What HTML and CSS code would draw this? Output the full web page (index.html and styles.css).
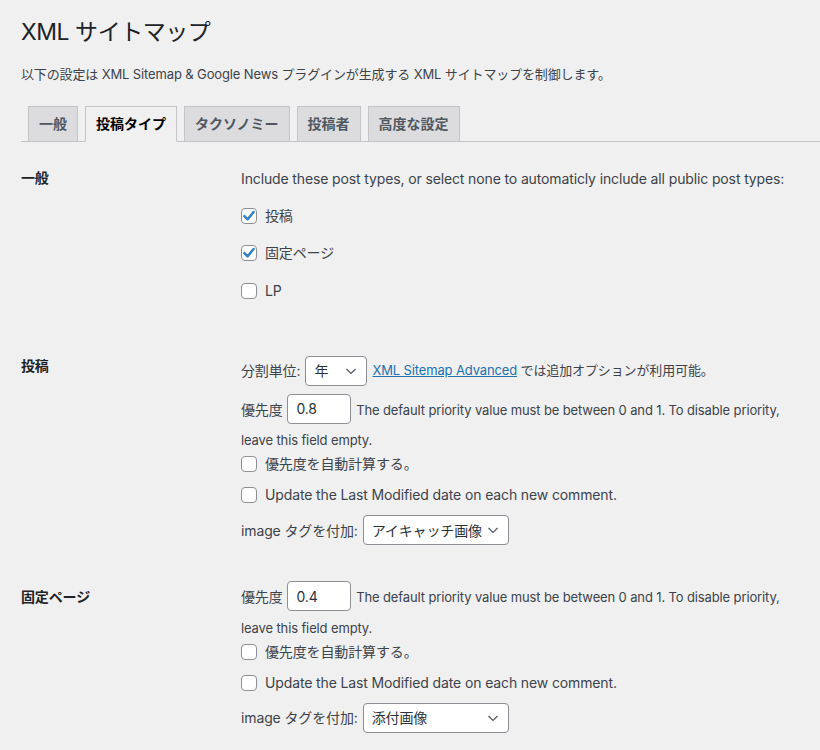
FILE: index.html
```html
<!DOCTYPE html>
<html lang="ja">
<head>
  <meta charset="UTF-8">
  <meta name="viewport" content="width=device-width, initial-scale=1.0">
  <title>XML サイトマップ</title>
  <link rel="stylesheet" href="styles.css">
</head>
<body>
  <div class="wrap">
    <h1>XML サイトマップ</h1>
    <p class="intro">以下の設定は XML Sitemap &amp; Google News プラグインが生成する XML サイトマップを制御します。</p>

    <nav class="nav-tabs">
      <a class="nav-tab" href="#">一般</a>
      <a class="nav-tab active" href="#">投稿タイプ</a>
      <a class="nav-tab" href="#">タクソノミー</a>
      <a class="nav-tab" href="#">投稿者</a>
      <a class="nav-tab" href="#">高度な設定</a>
    </nav>

    <table class="form-table">
      <tr>
        <th>一般</th>
        <td>
          <p class="lead">Include these post types, or select none to automaticly include all public post types:</p>
          <div class="type-list">
            <label class="check"><span class="box"><svg viewBox="0 0 14 14"><polyline points="2.4,7.2 5.6,10.4 11.6,3"/></svg></span>投稿</label>
            <label class="check"><span class="box"><svg viewBox="0 0 14 14"><polyline points="2.4,7.2 5.6,10.4 11.6,3"/></svg></span>固定ページ</label>
            <label class="check"><span class="box"></span>LP</label>
          </div>
        </td>
      </tr>
      <tr>
        <th>投稿</th>
        <td>
          <p class="sel-line">
            分割単位:
            <span class="select w-year">年<svg viewBox="0 0 16 16"><polyline points="3.5,6 8,10.5 12.5,6"/></svg></span>
            <span class="description"><a href="#">XML Sitemap Advanced</a> では追加オプションが利用可能。</span>
          </p>
          <p class="prio">
            <span>優先度</span> <input class="text-input" type="text" value="0.8">
            <span class="description">The default priority value must be between 0 and 1. To disable priority,</span>
            <span class="description">leave this field empty.</span>
          </p>
          <label class="check first"><span class="box"></span>優先度を自動計算する。</label>
          <label class="check"><span class="box"></span>Update the Last Modified date on each new comment.</label>
          <p class="img-line">
            image タグを付加:
            <span class="select w-image">アイキャッチ画像<svg viewBox="0 0 16 16"><polyline points="3.5,6 8,10.5 12.5,6"/></svg></span>
          </p>
        </td>
      </tr>
      <tr>
        <th>固定ページ</th>
        <td>
          <p class="prio top">
            <span>優先度</span> <input class="text-input" type="text" value="0.4">
            <span class="description">The default priority value must be between 0 and 1. To disable priority,</span>
            <span class="description">leave this field empty.</span>
          </p>
          <label class="check first"><span class="box"></span>優先度を自動計算する。</label>
          <label class="check"><span class="box"></span>Update the Last Modified date on each new comment.</label>
          <p class="img-line">
            image タグを付加:
            <span class="select w-image">添付画像<svg viewBox="0 0 16 16"><polyline points="3.5,6 8,10.5 12.5,6"/></svg></span>
          </p>
        </td>
      </tr>
    </table>
  </div>
</body>
</html>
```

FILE: styles.css
```css
* {
  box-sizing: border-box;
}

body {
  margin: 0;
  background: #f0f0f1;
  color: #3c434a;
  font-family: Inter, "Noto Sans CJK JP", sans-serif;
  font-size: 13px;
  line-height: 1.4;
  letter-spacing: -0.01em;
  overflow: hidden;
}

.wrap {
  padding: 10px 0 0 21px;
}

h1 {
  margin: 0;
  padding: 8px 0 4px;
  font-size: 23px;
  font-weight: 400;
  line-height: 1.3;
  color: #1d2327;
  letter-spacing: -0.02em;
}

.intro {
  margin: 13px 0;
  font-size: 13px;
  line-height: 1.5;
}

/* tabs */
.nav-tabs {
  display: flex;
  align-items: flex-end;
  padding-top: 9px;
  border-bottom: 1px solid #c3c4c7;
}

.nav-tab {
  margin-left: 7px;
  padding: 5px 10px;
  border: 1px solid #c3c4c7;
  border-bottom: none;
  background: #dcdcde;
  color: #50575e;
  font-size: 14px;
  font-weight: 600;
  line-height: 24px;
  letter-spacing: 0;
  text-decoration: none;
}

.nav-tab.active {
  background: #f0f0f1;
  color: #000;
  border-bottom: 1px solid #f0f0f1;
  margin-bottom: -1px;
}

/* settings table */
.form-table {
  width: 100%;
  margin-top: 7px;
  border-collapse: collapse;
}

.form-table th {
  width: 210px;
  padding: 20px 10px 20px 0;
  text-align: left;
  vertical-align: top;
  font-size: 14px;
  font-weight: 600;
  line-height: 1.3;
  color: #1d2327;
}

.form-table td {
  padding: 15px 10px;
  vertical-align: top;
  font-size: 14px;
  line-height: 1.5;
}

.form-table p {
  margin: 0;
}

.lead {
  margin-top: 4px !important;
}

.type-list {
  padding: 1px 0 19px;
}

.type-list .check {
  margin-top: 13.5px;
}

.check {
  display: flex;
  align-items: center;
  gap: 8px;
  line-height: 24px;
  margin-top: 7px;
}

.check.first {
  margin-top: -4px;
}

.box {
  width: 16px;
  height: 16px;
  border: 1px solid #8c8f94;
  border-radius: 4px;
  background: #fff;
  display: inline-flex;
  flex-shrink: 0;
}

.box svg {
  width: 14px;
  height: 14px;
  fill: none;
  stroke: #3582c4;
  stroke-width: 2.5;
  stroke-linecap: round;
  stroke-linejoin: round;
}

.sel-line {
  margin-top: 4px !important;
  display: flex;
  align-items: center;
  gap: 5px;
}

.img-line {
  margin: 8px 0 8px !important;
  display: flex;
  align-items: center;
  gap: 5px;
}

.select {
  display: inline-flex;
  align-items: center;
  justify-content: space-between;
  height: 30px;
  padding: 0 7px 0 8px;
  border: 1px solid #8c8f94;
  border-radius: 4px;
  background: #fff;
  color: #2c3338;
  font-size: 14px;
}

.select svg {
  width: 16px;
  height: 16px;
  fill: none;
  stroke: #50575e;
  stroke-width: 1.2;
}

.w-year {
  width: 62px;
}

.w-image {
  width: 146px;
}

.description {
  font-size: 13px;
}

.description a {
  color: #2271b1;
}

.prio {
  margin-top: 8px !important;
}

.prio.top {
  margin-top: -2px !important;
}

.prio .description {
  line-height: 31px;
}

.text-input {
  width: 64px;
  height: 30px;
  margin: 0 1px;
  padding: 0 8px;
  border: 1px solid #8c8f94;
  border-radius: 4px;
  background: #fff;
  color: #2c3338;
  font-family: inherit;
  font-size: 14px;
  letter-spacing: inherit;
}
```
